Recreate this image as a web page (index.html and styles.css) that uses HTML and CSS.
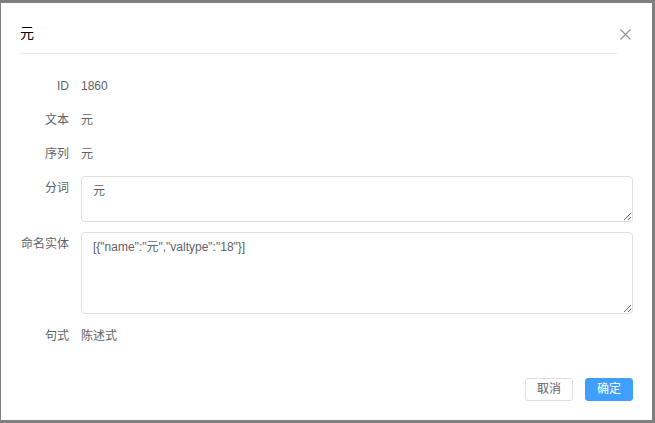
FILE: index.html
```html
<!DOCTYPE html>
<html lang="zh">
<head>
<meta charset="utf-8">
<link rel="stylesheet" href="styles.css">
</head>
<body>
<div class="dialog">
  <div class="header">
    <span class="title">元</span>
    <button class="close" aria-label="关闭">
      <svg width="11" height="11" viewBox="0 0 11 11"><path d="M0.5 0.5L10.5 10.5M10.5 0.5L0.5 10.5" stroke="#909399" stroke-width="1.2" fill="none"/></svg>
    </button>
  </div>
  <div class="form">
    <div class="row"><label class="label">ID</label><div class="value">1860</div></div>
    <div class="row"><label class="label">文本</label><div class="value">元</div></div>
    <div class="row"><label class="label">序列</label><div class="value">元</div></div>
    <div class="row"><label class="label">分词</label><textarea class="ta ta-small">元</textarea></div>
    <div class="row"><label class="label">命名实体</label><textarea class="ta ta-big">[{"name":"元","valtype":"18"}]</textarea></div>
    <div class="row"><label class="label">句式</label><div class="value">陈述式</div></div>
  </div>
  <div class="footer">
    <button class="btn">取消</button>
    <button class="btn primary">确定</button>
  </div>
</div>
</body>
</html>
```

FILE: styles.css
```css
html, body {
  margin: 0;
  padding: 0;
}
body {
  background: #7f7f7f;
  width: 655px;
  height: 423px;
  overflow: hidden;
  font-family: "Liberation Sans", Arial, "Noto Sans CJK SC", sans-serif;
  font-size: 12px;
  color: #606266;
}
.dialog {
  box-sizing: border-box;
  margin: 3px 0 0 1px;
  width: 651px;
  height: 417px;
  background: #fff;
  padding: 0 19px 0 19px;
  display: flex;
  flex-direction: column;
}
.header {
  height: 50px;
  border-bottom: 1px solid #e4e7ed;
  margin-right: 16px;
  display: flex;
  align-items: flex-end;
  position: relative;
}
.title {
  font-size: 14px;
  line-height: 20px;
  color: #000;
  padding-bottom: 10px;
}
.close {
  position: absolute;
  right: -14px;
  top: 26px;
  border: 0;
  background: none;
  padding: 0;
  width: 11px;
  height: 11px;
  display: block;
}
.close svg { display: block; }
.form {
  display: flex;
  flex-direction: column;
  gap: 10px;
  padding-top: 20px;
}
.row {
  display: flex;
  align-items: flex-start;
  gap: 12px;
}
.label {
  width: 49px;
  flex: none;
  text-align: right;
  line-height: 24px;
  color: #606266;
  white-space: nowrap;
}
.value {
  line-height: 24px;
}
.ta {
  flex: 1;
  box-sizing: border-box;
  border: 1px solid #dcdfe6;
  border-radius: 4px;
  padding: 5px 11px;
  font-family: "Liberation Sans", Arial, "Noto Sans CJK SC", sans-serif;
  font-size: 12px;
  line-height: 18px;
  color: #606266;
  resize: vertical;
  margin: 0;
  outline: none;
}
.ta-small { height: 46px; }
.ta-big { height: 82px; }
.footer {
  display: flex;
  justify-content: flex-end;
  gap: 12px;
  padding-top: 30px;
}
.btn {
  box-sizing: border-box;
  height: 23px;
  width: 48px;
  border: 1px solid #dcdfe6;
  border-radius: 3px;
  background: #fff;
  color: #606266;
  font-family: "Liberation Sans", Arial, "Noto Sans CJK SC", sans-serif;
  font-size: 12px;
  padding: 0;
  line-height: 21px;
}
.btn.primary {
  background: #409eff;
  border-color: #409eff;
  color: #fff;
}
```
